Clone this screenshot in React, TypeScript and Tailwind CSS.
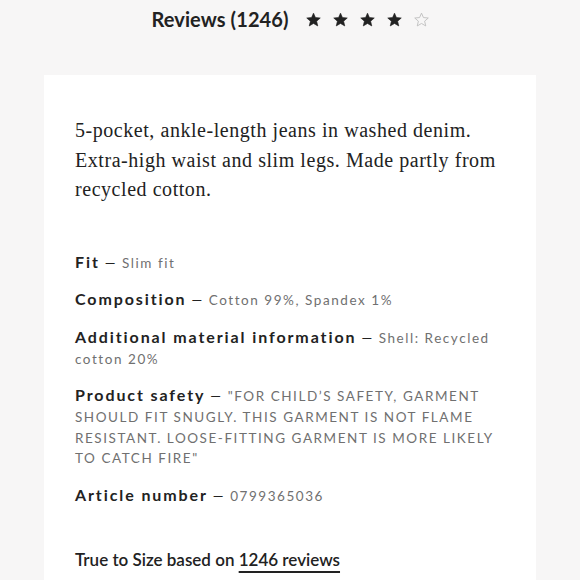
import React from 'react';

type Detail = {
  label: string;
  value: string;
};

const details: Detail[] = [
  { label: 'Fit', value: 'Slim fit' },
  { label: 'Composition', value: 'Cotton 99%, Spandex 1%' },
  { label: 'Additional material information', value: 'Shell: Recycled cotton 20%' },
  {
    label: 'Product safety',
    value: '"FOR CHILD\u2019S SAFETY, GARMENT SHOULD FIT SNUGLY. THIS GARMENT IS NOT FLAME RESISTANT. LOOSE-FITTING GARMENT IS MORE LIKELY TO CATCH FIRE"',
  },
  { label: 'Article number', value: '0799365036' },
];

const Star = ({ filled }: { filled: boolean }) => (
  <svg width="15" height="15" viewBox="0 0 24 24" aria-hidden="true">
    <path
      d="M12 1.8l3.1 7.1 7.7.7-5.8 5.1 1.8 7.6L12 18.3l-6.8 4 1.8-7.6-5.8-5.1 7.7-.7z"
      fill={filled ? '#222222' : 'none'}
      stroke={filled ? '#222222' : '#bdbdbd'}
      strokeWidth={filled ? 1 : 1.4}
      strokeLinejoin="round"
    />
  </svg>
);

export default function App() {
  const rating = 4;

  return (
    <div className="min-h-[580px] w-[580px] overflow-hidden bg-[#f7f6f6] font-['Lato',sans-serif] text-[#222222]">
      {/* --- cabeçalho de avaliações --- */}
      <div className="flex h-[38px] items-center justify-center gap-[17px]">
        <h2 className="text-[20px] font-bold leading-none tracking-[0.1px]">Reviews (1246)</h2>
        <div className="flex items-center gap-[12px]">
          {[0, 1, 2, 3, 4].map(i => (
            <Star key={i} filled={i < rating} />
          ))}
        </div>
      </div>

      <div className="mx-[44px] mt-[37px] bg-white px-[31px] pb-10 pt-[41px]">
        <p className="font-['Liberation_Serif',serif] text-[20px] leading-[29.5px] tracking-[0.55px] text-[#222222]">
          5-pocket, ankle-length jeans in washed denim. Extra-high waist and slim legs. Made partly from recycled cotton.
        </p>

        <dl className="mt-[47px] flex flex-col gap-[16px]">
          {details.map(d => (
            <div key={d.label} className="text-[13.5px] leading-[20.7px] tracking-[1.55px] text-[#707070]">
              <dt className="inline text-[16px] font-bold tracking-[1.9px] text-[#222222]">{d.label}</dt>
              <span className="text-[#222222]"> — </span>
              <dd className="inline">{d.value}</dd>
            </div>
          ))}
        </dl>

        <p className="mt-[44px] text-[17px] font-semibold leading-none text-[#222222]">
          True to Size based on{' '}
          <a href="#" className="underline decoration-[1.5px] underline-offset-[5px]">
            1246 reviews
          </a>
        </p>
      </div>
    </div>
  );
}
